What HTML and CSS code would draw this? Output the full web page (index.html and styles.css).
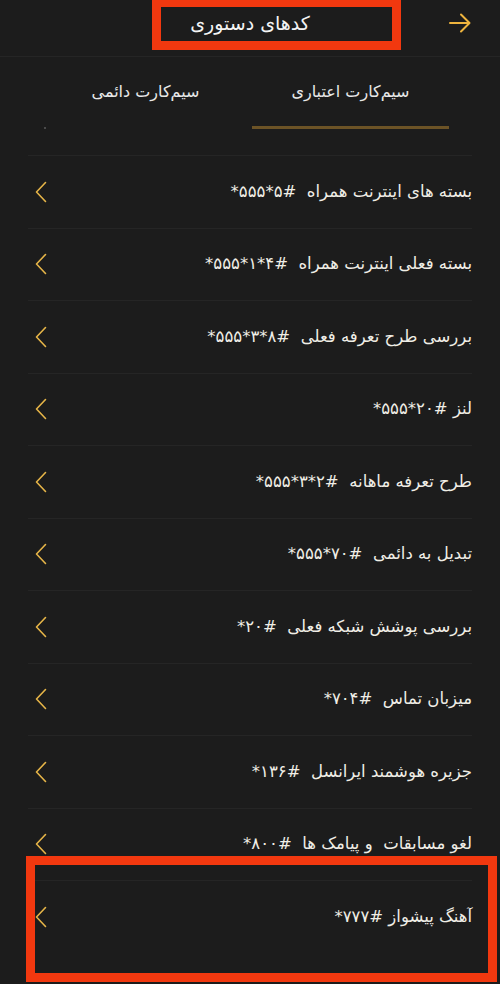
FILE: index.html
```html
<!DOCTYPE html>
<html lang="fa" dir="rtl">
<head>
<meta charset="utf-8">
<title>کدهای دستوری</title>
<link rel="stylesheet" href="styles.css">
</head>
<body>
<div class="screen">
  <header class="header">
    <div class="back">
      <svg width="22" height="20" viewBox="0 0 22 20" fill="none" stroke="#eeb43e" stroke-width="2" stroke-linecap="round" stroke-linejoin="round"><path d="M1 10H20M12 1.5L20.5 10L12 18.5"/></svg>
    </div>
    <h1 class="title">کدهای دستوری</h1>
    <div class="spacer"></div>
  </header>

  <nav class="tabs">
    <div class="tab active"><span>سیم&zwnj;کارت اعتباری</span></div>
    <div class="tab"><span>سیم&zwnj;کارت دائمی</span></div>
  </nav>
  <div class="dot"></div>

  <ul class="list">
    <li class="row"><span class="label">بسته های اینترنت همراه&nbsp; <bdi dir="ltr">*۵۵۵*۵#</bdi></span><svg class="chev" viewBox="0 0 12 22"><path d="M10.5 1.5L1.5 11L10.5 20.5"/></svg></li>
    <li class="row"><span class="label">بسته فعلی اینترنت همراه&nbsp; <bdi dir="ltr">*۵۵۵*۱*۴#</bdi></span><svg class="chev" viewBox="0 0 12 22"><path d="M10.5 1.5L1.5 11L10.5 20.5"/></svg></li>
    <li class="row"><span class="label">بررسی طرح تعرفه فعلی&nbsp; <bdi dir="ltr">*۵۵۵*۳*۸#</bdi></span><svg class="chev" viewBox="0 0 12 22"><path d="M10.5 1.5L1.5 11L10.5 20.5"/></svg></li>
    <li class="row"><span class="label">لنز <bdi dir="ltr">*۵۵۵*۲۰#</bdi></span><svg class="chev" viewBox="0 0 12 22"><path d="M10.5 1.5L1.5 11L10.5 20.5"/></svg></li>
    <li class="row"><span class="label">طرح تعرفه ماهانه&nbsp; <bdi dir="ltr">*۵۵۵*۳*۲#</bdi></span><svg class="chev" viewBox="0 0 12 22"><path d="M10.5 1.5L1.5 11L10.5 20.5"/></svg></li>
    <li class="row"><span class="label">تبدیل به دائمی&nbsp; <bdi dir="ltr">*۵۵۵*۷۰#</bdi></span><svg class="chev" viewBox="0 0 12 22"><path d="M10.5 1.5L1.5 11L10.5 20.5"/></svg></li>
    <li class="row"><span class="label">بررسی پوشش شبکه فعلی&nbsp; <bdi dir="ltr">*۲۰#</bdi></span><svg class="chev" viewBox="0 0 12 22"><path d="M10.5 1.5L1.5 11L10.5 20.5"/></svg></li>
    <li class="row"><span class="label">میزبان تماس&nbsp; <bdi dir="ltr">*۷۰۴#</bdi></span><svg class="chev" viewBox="0 0 12 22"><path d="M10.5 1.5L1.5 11L10.5 20.5"/></svg></li>
    <li class="row"><span class="label">جزیره هوشمند ایرانسل&nbsp; <bdi dir="ltr">*۱۳۶#</bdi></span><svg class="chev" viewBox="0 0 12 22"><path d="M10.5 1.5L1.5 11L10.5 20.5"/></svg></li>
    <li class="row"><span class="label">لغو مسابقات&nbsp; و پیامک ها&nbsp; <bdi dir="ltr">*۸۰۰#</bdi></span><svg class="chev" viewBox="0 0 12 22"><path d="M10.5 1.5L1.5 11L10.5 20.5"/></svg></li>
    <li class="row"><span class="label">آهنگ پیشواز <bdi dir="ltr">*۷۷۷#</bdi></span><svg class="chev" viewBox="0 0 12 22"><path d="M10.5 1.5L1.5 11L10.5 20.5"/></svg></li>
  </ul>

  <div class="mark mark-title"></div>
  <div class="mark mark-row"></div>
</div>
</body>
</html>
```

FILE: styles.css
```css
html, body {
  margin: 0;
  padding: 0;
  background: #1c1c1c;
}

.screen {
  position: relative;
  width: 500px;
  height: 984px;
  overflow: hidden;
  background: #1c1c1c;
  font-family: "DejaVu Sans", "Noto Sans", sans-serif;
  color: #f0eee6;
}

.header {
  height: 56px;
  border-bottom: 1px solid #252525;
  display: grid;
  grid-template-columns: 1fr auto 1fr;
  align-items: start;
}

.back {
  justify-self: start;
  padding-right: 29px;
  padding-top: 13px;
  display: flex;
}

.title {
  margin: 0;
  padding-top: 11px;
  font-size: 19px;
  font-weight: normal;
  line-height: 24px;
  color: #f4f4f4;
}

.tabs {
  display: flex;
  gap: 8px;
  padding-right: 51px;
  height: 72px;
}

.tab {
  width: 197px;
  display: flex;
  align-items: center;
  justify-content: center;
  font-size: 16px;
  color: #e8e8e8;
  box-sizing: border-box;
  border-bottom: 3px solid transparent;
}

.tab.active {
  border-bottom-color: #6c5326;
}

.dot {
  position: absolute;
  left: 44px;
  top: 127px;
  width: 2px;
  height: 2px;
  background: #4a4a4a;
}

.list {
  list-style: none;
  margin: 26px 28px 0;
  padding: 0;
  border-top: 1px solid #252525;
}

.row {
  height: 71.5px;
  border-bottom: 1px solid #252525;
  display: flex;
  align-items: center;
  justify-content: space-between;
  padding-left: 7px;
}

.row:last-child {
  border-bottom: none;
}

.label {
  font-size: 16.5px;
  line-height: 20px;
  color: #f0eee6;
  white-space: nowrap;
}

.chev {
  width: 12px;
  height: 22px;
  fill: none;
  stroke: #e6b548;
  stroke-width: 1.6;
  stroke-linecap: round;
  stroke-linejoin: round;
}

.mark {
  position: absolute;
  border: 9px solid #f2380f;
  box-sizing: border-box;
}

.mark-title {
  left: 152px;
  top: -2px;
  width: 249px;
  height: 52px;
}

.mark-row {
  left: 26px;
  top: 856px;
  width: 471px;
  height: 126px;
}
```
